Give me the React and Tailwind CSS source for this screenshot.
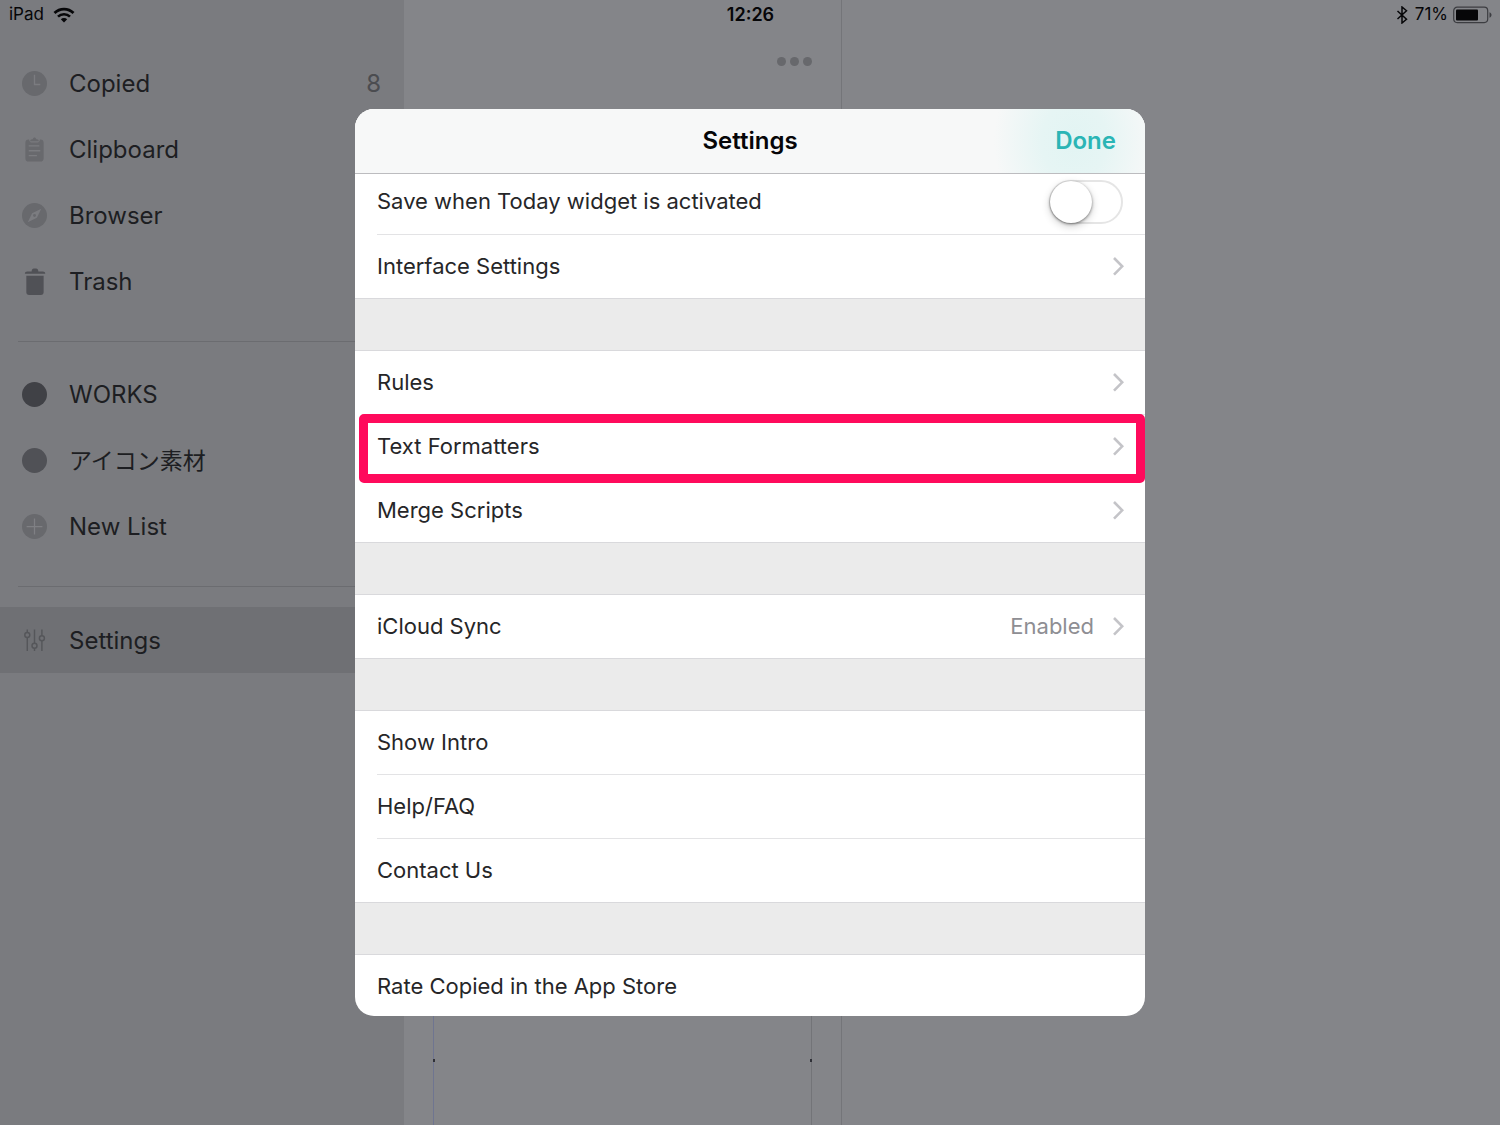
import React from 'react'

const ClockIcon = () => (
  <svg viewBox="0 0 26 26" className="size-[25px]" aria-hidden="true">
    <circle cx="13" cy="13" r="13" fill="#68696d" />
    <path d="M13 4v10h6" fill="none" stroke="#7b7c80" strokeWidth="1.400" />
  </svg>
)

const ClipboardIcon = () => (
  <svg viewBox="0 0 26 26" className="size-[25px]" aria-hidden="true">
    <path d="M7 2.500h.3c.3 2.200 1.400 3.200 3.200 3.200h5c1.800 0 2.900-1 3.200-3.200h.3a3.500 3.500 0 0 1 3.500 3.500V22a3.500 3.500 0 0 1-3.500 3.500H7A3.500 3.500 0 0 1 3.500 22V6A3.500 3.500 0 0 1 7 2.500z" fill="#68696d" />
    <path d="M8.500 4.500c0-1.300.8-2.200 2-2.200h.7C11.500 1.200 12.200.5 13 .5s1.500.7 1.800 1.800h.7c1.200 0 2 .9 2 2.200z" fill="#68696d" />
    <path d="M7 9.300h11M7 14.300h12M7 19.300h8.500" stroke="#7b7c80" strokeWidth="1.400" />
  </svg>
)

const CompassIcon = () => (
  <svg viewBox="0 0 26 26" className="size-[25px]" aria-hidden="true">
    <circle cx="13" cy="13" r="13" fill="#68696d" />
    <path d="M20 6l-4.500 9.300L6 20l4.500-9.300z" fill="#7b7c80" />
    <circle cx="13" cy="13" r="1.500" fill="#68696d" />
  </svg>
)

const TrashIcon = () => (
  <svg viewBox="0 0 26 26" className="size-[25px] overflow-visible" aria-hidden="true">
    <path d="M3 5C3 3.500 4 2.600 5.500 2.600H10C10.200.6 11-.4 12.300-.4h2.400c1.300 0 2.100 1 2.300 3h4.700c1.500 0 2.500.9 2.500 2.400z" fill="#505156" />
    <path d="M4.500 7h18v17a3 3 0 0 1-3 3h-12a3 3 0 0 1-3-3z" fill="#505156" />
  </svg>
)

const DarkDotIcon = () => (
  <svg viewBox="0 0 26 26" className="size-[25px]" aria-hidden="true">
    <circle cx="13" cy="13" r="13" fill="#404146" />
  </svg>
)

const DotIcon = () => (
  <svg viewBox="0 0 26 26" className="size-[25px]" aria-hidden="true">
    <circle cx="13" cy="13" r="13" fill="#505156" />
  </svg>
)

const PlusIcon = () => (
  <svg viewBox="0 0 26 26" className="size-[25px]" aria-hidden="true">
    <circle cx="13" cy="13" r="13" fill="#68696d" />
    <path d="M13 4.800v16.400M4.800 13h16.400" stroke="#7f8084" strokeWidth="1.300" />
  </svg>
)

const SlidersIcon = () => (
  <svg viewBox="0 0 26 26" className="size-[25px]" fill="none" stroke="#55565a" strokeWidth="1.500" aria-hidden="true">
    <path d="M5.500 1.500v3.200M5.500 9.900V24M13 1.500v14.300M13 21v3M20.700 1.500V8M20.700 13.200V24" />
    <circle cx="5.500" cy="7.300" r="2.600" />
    <circle cx="13" cy="18.400" r="2.600" />
    <circle cx="20.700" cy="10.600" r="2.600" />
  </svg>
)

const WifiIcon = () => (
  <svg viewBox="0 0 22 16" className="h-4 w-[22px]" fill="none" stroke="#060608" aria-hidden="true">
    <path d="M1.500 6A13.500 13.500 0 0 1 20.500 6" strokeWidth="2.800" />
    <path d="M5 9.700a8.500 8.500 0 0 1 12 0" strokeWidth="2.600" />
    <path d="M11 15.500L7.800 12.300a4.500 4.500 0 0 1 6.400 0z" fill="#060608" stroke="none" />
  </svg>
)

const BluetoothIcon = () => (
  <svg viewBox="0 0 12 18" className="h-[18px] w-3" fill="none" stroke="#060608" strokeWidth="1.500" aria-hidden="true">
    <path d="M1.500 5l9 8.200L6 17V1l4.500 3.800-9 8.200" />
  </svg>
)

const BatteryIcon = () => (
  <svg viewBox="0 0 39 18" className="h-[18px] w-[39px]" aria-hidden="true">
    <rect x="0.700" y="1.200" width="34" height="15.400" rx="3.500" fill="none" stroke="#3c3d41" strokeWidth="1.200" />
    <rect x="3" y="3.500" width="22" height="11" rx="1" fill="#060608" />
    <path d="M36.500 6.300c1.400.6 2 1.500 2 2.700s-.6 2.100-2 2.700z" fill="#3c3d41" />
  </svg>
)

const Chevron = () => (
  <svg viewBox="0 0 12 20" className="h-5 w-3 shrink-0" fill="none" stroke="#c4c4c8" strokeWidth="2.600" aria-hidden="true">
    <path d="M2 1l8.200 8.300L2 17.600" />
  </svg>
)

const mainItems = [
  { label: 'Copied', icon: ClockIcon, count: 8 },
  { label: 'Clipboard', icon: ClipboardIcon },
  { label: 'Browser', icon: CompassIcon },
  { label: 'Trash', icon: TrashIcon },
]

const listItems = [
  { label: 'WORKS', icon: DarkDotIcon },
  { label: 'アイコン素材', icon: DotIcon, japanese: true },
  { label: 'New List', icon: PlusIcon },
]

const sections = [
  [
    { label: 'Save when Today widget is activated', type: 'toggle' },
    { label: 'Interface Settings', type: 'link' },
  ],
  [
    { label: 'Rules', type: 'link' },
    { label: 'Text Formatters', type: 'link', marked: true },
    { label: 'Merge Scripts', type: 'link' },
  ],
  [{ label: 'iCloud Sync', type: 'link', value: 'Enabled' }],
  [{ label: 'Show Intro' }, { label: 'Help/FAQ' }, { label: 'Contact Us' }],
  [{ label: 'Rate Copied in the App Store' }],
]

const SidebarItem = ({ item, active }) => {
  const Icon = item.icon
  return (
    <button
      type="button"
      className={`flex h-[66px] w-full items-center gap-[22px] pl-[22px] pr-[23px] text-left text-[#1d1e22] ${
        item.japanese ? 'text-[23px]' : 'text-2xl'
      } ${active ? 'bg-[#6f7074]' : ''}`}
    >
      <Icon />
      <span className="flex-1 pt-0.5">{item.label}</span>
      {item.count && <span className="pt-0.5 text-[#4b4c50]">{item.count}</span>}
    </button>
  )
}

const Sidebar = () => (
  <nav className="w-[404px] shrink-0 bg-[#7a7b7f] pt-[50px]">
    {mainItems.map(item => (
      <SidebarItem key={item.label} item={item} />
    ))}
    <hr className="mb-[19px] ml-[18px] mt-[27px] border-[#6b6c70]" />
    {listItems.map(item => (
      <SidebarItem key={item.label} item={item} />
    ))}
    <hr className="mb-5 ml-[18px] mt-[27px] border-[#6b6c70]" />
    <SidebarItem item={{ label: 'Settings', icon: SlidersIcon }} active />
  </nav>
)

const StatusBar = () => (
  <header className="absolute inset-x-0 top-0 grid h-[30px] grid-cols-3 items-center pl-[9px] pr-2 text-[17px] text-[#060608]">
    <div className="flex items-center gap-[9px]">
      <span>iPad</span>
      <WifiIcon />
    </div>
    <div className="text-center text-lg font-semibold">12:26</div>
    <div className="flex items-center justify-end gap-[5px]">
      <BluetoothIcon />
      <span className="pl-0.5">71%</span>
      <BatteryIcon />
    </div>
  </header>
)

const SettingsRow = ({ row, last }) => {
  const line = last ? 'border-transparent' : 'border-[#e3e3e5]'

  if (row.type === 'toggle') {
    return (
      <li className="pl-[22px]">
        <label className={`flex h-16 items-center justify-between border-b pb-0.5 pr-[22px] ${line}`}>
          {row.label}
          <input
            type="checkbox"
            className="h-11 w-[74px] appearance-none rounded-full border-2 border-[#e5e5e5] bg-white before:-ml-px before:-mt-px before:block before:size-[42px] before:rounded-full before:bg-white before:shadow-[0_3px_8px_rgba(0,0,0,0.2),0_1px_3px_rgba(0,0,0,0.45)] before:content-[''] checked:bg-[#2bb5b5] checked:before:translate-x-[30px]"
          />
        </label>
      </li>
    )
  }

  return (
    <li className="relative pl-[22px]">
      <button type="button" className={`flex h-16 w-full items-center gap-[18px] border-b pr-[21px] text-left ${line}`}>
        <span className="flex-1">{row.label}</span>
        {row.value && <span className="text-[#8e8e93]">{row.value}</span>}
        {row.type === 'link' && <Chevron />}
      </button>
      {row.marked && (
        <span className="pointer-events-none absolute -bottom-1 -top-px left-1 right-0 z-10 rounded-[5px] border-9 border-[#ff0a5c]" />
      )}
    </li>
  )
}

const SettingsDialog = () => (
  <section
    role="dialog"
    aria-labelledby="settings-title"
    className="w-full max-w-[790px] overflow-hidden rounded-[19px] bg-white text-[22px] text-[#262628]"
  >
    <header className="relative z-10 grid h-[65px] grid-cols-3 items-center border-b border-[#bcbcbf] bg-[#f7f7f8] bg-[radial-gradient(ellipse_80px_100px_at_91%_50%,#e2f4f3_0,#e6f5f4_40%,#f7f8f8_100%)] px-[29px] text-2xl font-semibold">
      <h2 id="settings-title" className="col-start-2 text-center text-[#060608]">
        Settings
      </h2>
      <button type="button" className="justify-self-end text-[#2bb5b5]">
        Done
      </button>
    </header>
    <div className="-my-[3px]">
      {sections.map((rows, i) => (
        <React.Fragment key={rows[0].label}>
          {i > 0 && <div className="-mt-px h-[53px] border-y border-[#d9d9dc] bg-[#ebebeb]" />}
          <ul>
            {rows.map((row, n) => (
              <SettingsRow key={row.label} row={row} last={n === rows.length - 1} />
            ))}
          </ul>
        </React.Fragment>
      ))}
    </div>
  </section>
)

const App = () => (
  <div className="relative flex min-h-screen bg-[#848589] font-['Inter','Noto_Sans_CJK_JP',sans-serif]">
    <Sidebar />
    <main className="flex w-[438px] shrink-0 flex-col border-r border-[#747579] px-[29px] pt-[50px]">
      <button type="button" aria-label="More" className="flex h-[22px] items-center gap-1 self-end">
        <span className="size-[9px] rounded-full bg-[#67686c]" />
        <span className="size-[9px] rounded-full bg-[#67686c]" />
        <span className="size-[9px] rounded-full bg-[#67686c]" />
      </button>
      <div className="mt-20 flex flex-1 items-end justify-between border-l border-r border-l-[#6f7590] border-r-[#737478] pb-[63px]">
        <span className="-ml-px h-[3px] w-0.5 bg-[#303138]" />
        <span className="-mr-px h-[3px] w-0.5 bg-[#303138]" />
      </div>
    </main>
    <StatusBar />
    <div className="absolute inset-0 flex items-center justify-center">
      <SettingsDialog />
    </div>
  </div>
)

export default App
